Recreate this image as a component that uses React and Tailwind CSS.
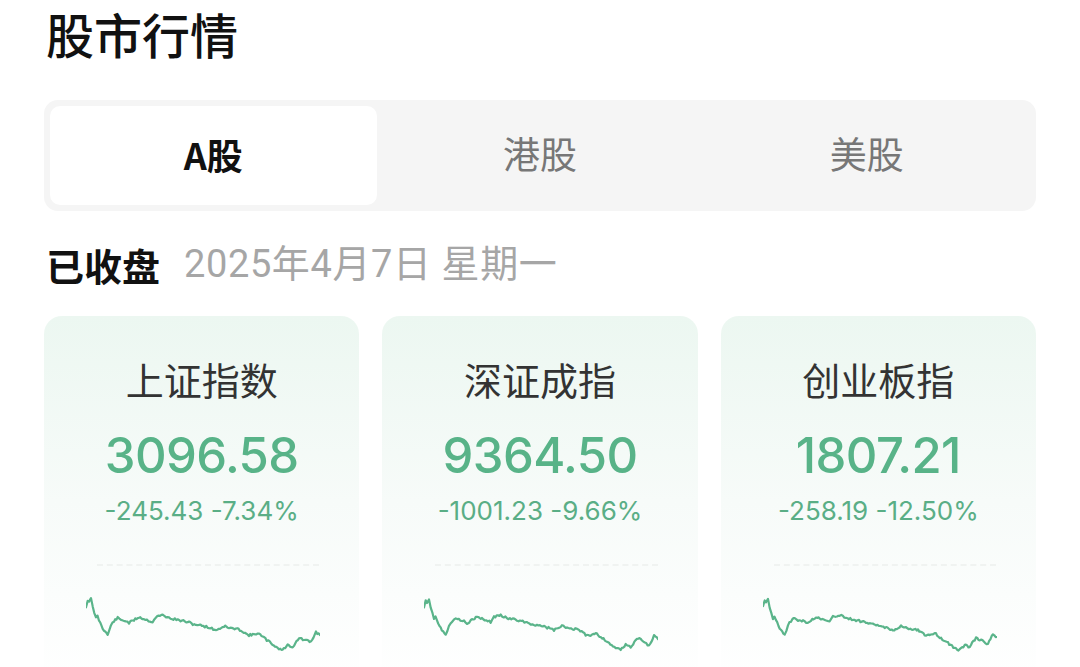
import React from "react";

const BASE = [
  [0, 43], [1.7, 36], [3, 38], [5, 35], [6.7, 43], [10, 54], [11.5, 52], [13, 56], [16.7, 64], [21.7, 71],
  [25, 61], [28, 57], [31.7, 54], [35, 56], [40, 57], [43, 59], [48, 56], [53, 53], [58, 55], [66.7, 58],
  [70, 53], [76.7, 51], [83, 54], [91.7, 56], [101.7, 58], [106.7, 60], [113, 61], [121.7, 63], [130, 66],
  [135, 64], [138, 62], [143, 64], [150, 65], [155, 66], [161.7, 71], [166.7, 71], [171.7, 69], [176.7, 73],
  [185, 79], [191.7, 84], [196.7, 86], [201.7, 81], [206.7, 83], [213, 74], [218, 76], [225, 78], [230, 68], [234, 71],
];

function makePath(seed, endAdj) {
  let s = seed;
  const rnd = () => {
    s = (s * 9301 + 49297) % 233280;
    return s / 233280;
  };
  const pts = BASE.map(([x, y], i) => (i >= BASE.length - 3 ? [x, y + endAdj] : [x, y]));
  const out = [];
  for (let i = 0; i < pts.length - 1; i++) {
    const [x0, y0] = pts[i];
    const [x1, y1] = pts[i + 1];
    const n = Math.max(1, Math.round((x1 - x0) / 1.4));
    for (let k = 0; k < n; k++) {
      const t = k / n;
      const jitter = (rnd() - 0.5) * 2.2;
      out.push([x0 + (x1 - x0) * t, y0 + (y1 - y0) * t + jitter]);
    }
  }
  out.push(pts[pts.length - 1]);
  return out.map(([x, y], i) => `${i ? "L" : "M"}${x.toFixed(1)} ${y.toFixed(1)}`).join(" ");
}

const CARDS = [
  { name: "上证指数", value: "3096.58", change: "-245.43 -7.34%", seed: 11, adj: 0 },
  { name: "深证成指", value: "9364.50", change: "-1001.23 -9.66%", seed: 37, adj: 4 },
  { name: "创业板指", value: "1807.21", change: "-258.19 -12.50%", seed: 73, adj: 2 },
];

const cjk = { fontFamily: '"Noto Sans CJK SC", "Noto Sans", sans-serif' };
const num = { fontFamily: 'Inter, "Noto Sans CJK SC", sans-serif' };

function Card({ c }) {
  return (
    <div className="flex h-[370px] flex-col items-center rounded-[18px] bg-gradient-to-b from-[#ecf7f1] via-[#f7fbf9] to-[#ffffff] pt-[41px]">
      <div className="text-[38px] leading-[44px] text-[#333333]" style={cjk}>
        {c.name}
      </div>
      <div className="mt-[25px] text-[49px] font-medium leading-[60px] tracking-[-0.6px] text-[#58b388]" style={num}>
        {c.value}
      </div>
      <div className="mt-[8px] text-[26px] leading-[34px] text-[#5aae86]" style={num}>
        {c.change}
      </div>
      <div className="mt-[36px] w-full pl-[42px] pr-[40px]">
        <div className="relative h-[100px] w-full">
          <div className="ml-[11px] border-t-2 border-dashed border-[#f0f3f1]" />
          <svg className="absolute left-0 top-0" width="234" height="100" viewBox="0 0 234 100">
            <path d={makePath(c.seed, c.adj)} fill="none" stroke="#5ab48a" strokeWidth="2.2" strokeLinejoin="round" strokeLinecap="round" />
          </svg>
        </div>
      </div>
    </div>
  );
}

export default function App() {
  return (
    <div className="h-[667px] w-[1080px] overflow-hidden bg-white px-[44px]" style={cjk}>
      <div className="h-[66px] pl-[2px] text-[48px] font-medium leading-[66px] text-[#111111]">股市行情</div>
      <div className="mt-[34px] grid h-[111px] grid-cols-3 rounded-[14px] bg-[#f5f5f5] p-[6px]">
        <div className="flex items-center justify-center rounded-[10px] bg-white pb-[4px] text-[36px] font-semibold text-[#111111]">A股</div>
        <div className="flex items-center justify-center pb-[4px] text-[37px] text-[#777777]">港股</div>
        <div className="flex items-center justify-center pb-[4px] text-[37px] text-[#777777]">美股</div>
      </div>
      <div className="mt-[28px] flex h-[50px] items-center pl-[2px]">
        <span className="text-[38px] font-bold text-[#111111]">已收盘</span>
        <span className="ml-[24px] text-[38px] tracking-[0.6px] text-[#a6a6a6]" style={{ fontFamily: 'Roboto, "Noto Sans CJK SC", sans-serif' }}>
          2025年4月7日 星期一
        </span>
      </div>
      <div className="mt-[27px] grid grid-cols-3 gap-[23px]">
        {CARDS.map((c) => (
          <Card key={c.name} c={c} />
        ))}
      </div>
    </div>
  );
}
